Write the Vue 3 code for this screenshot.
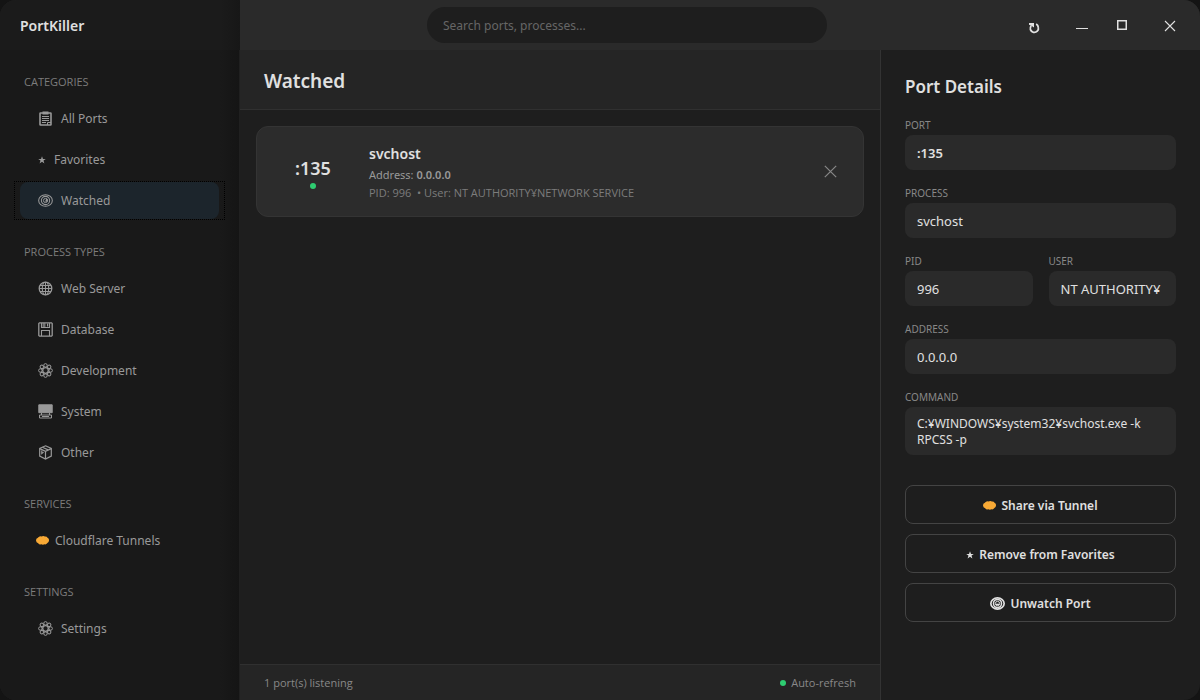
<template>
  <svg class="sprite" aria-hidden="true">
    <symbol id="clipboard" viewBox="0 0 15 15">
      <rect x="2" y="2" width="11" height="12" rx="0.5" fill="none" stroke="currentColor" stroke-width="1.6" />
      <rect x="4.5" y="0.5" width="6" height="3" fill="currentColor" />
      <path d="M4 5.5h7M4 7.5h7M4 9.5h7M4 11.5h4" fill="none" stroke="currentColor" />
      <path d="M9.5 14v-2.5h3.5" fill="none" stroke="currentColor" />
    </symbol>
    <symbol id="star" viewBox="0 0 8 8">
      <path d="M4 0.2l1 2.7h2.8L5.5 4.6l0.9 3L4 5.8 1.6 7.6l0.9-3L0.2 2.9H3z" fill="currentColor" />
    </symbol>
    <symbol id="eye" viewBox="0 0 16 14">
      <ellipse cx="8" cy="7" rx="7.3" ry="6.2" fill="none" stroke="currentColor" stroke-width="1.1" />
      <circle cx="8" cy="7" r="4.4" fill="none" stroke="currentColor" stroke-width="1.1" />
      <circle cx="8" cy="7" r="2.2" fill="none" stroke="currentColor" />
      <path d="M8 7l1-2.4a2.6 2.6 0 0 1 1.5 3.2L8 8.6z" fill="currentColor" />
    </symbol>
    <symbol id="eye-solid" viewBox="0 0 16 14">
      <ellipse cx="8" cy="7" rx="7.1" ry="6" fill="none" stroke="currentColor" stroke-width="1.8" />
      <circle cx="8" cy="7" r="4.3" fill="none" stroke="currentColor" stroke-width="1.6" />
      <circle cx="8" cy="7" r="2.3" fill="none" stroke="currentColor" />
      <path d="M6 7.2h4v1.6H6z" fill="currentColor" />
    </symbol>
    <symbol id="globe" viewBox="0 0 15 15">
      <g fill="none" stroke="currentColor">
        <circle cx="7.5" cy="7.5" r="6.3" stroke-width="1.3" />
        <ellipse cx="7.5" cy="7.5" rx="3.2" ry="6.2" stroke-width="1.1" />
        <path d="M7.5 1v13M1 7.5h13M2 4.5h11M2 10.5h11" />
      </g>
    </symbol>
    <symbol id="disk" viewBox="0 0 15 15">
      <g fill="none" stroke="currentColor">
        <path d="M1.5 0.8h12l0.7 0.7v12l-0.7 0.7h-12l-0.7-0.7v-12z" stroke-width="1.3" />
        <path d="M3.5 1v4.5h8V1M3.5 14V8.5h8V14" stroke-width="1.1" />
      </g>
      <path d="M4.5 1h3v4h-3z" fill="currentColor" opacity="0.7" />
      <path d="M9 1.5h1.2v3h-1.2z" fill="currentColor" />
    </symbol>
    <symbol id="gear" viewBox="0 0 15 15">
      <g fill="none" stroke="currentColor">
        <circle cx="7.5" cy="7.5" r="2.8" stroke-width="1.3" />
        <circle
          v-for="n in 8"
          :key="n"
          cx="7.5"
          cy="2.3"
          r="1.7"
          :transform="`rotate(${n * 45} 7.5 7.5)`"
        />
      </g>
    </symbol>
    <symbol id="computer" viewBox="0 0 15 15">
      <path d="M0.8 0.8h13.4v7.9h-13.4z" fill="currentColor" stroke="currentColor" />
      <path d="M3.5 9v2M11.5 9v2M1.5 11h12v3h-12zM4 12.5h7" fill="none" stroke="currentColor" />
    </symbol>
    <symbol id="box" viewBox="0 0 15 15">
      <g fill="none" stroke="currentColor" stroke-width="1.2">
        <path d="M7.5 0.8l5.8 2.7v7.6l-5.8 3-5.8-3V3.5z" />
        <path d="M1.7 3.6l5.8 2.8 5.8-2.8M7.5 6.4V14M4.4 2.2l5.8 2.7" />
        <path d="M3.8 5.5v3l1.8-1.4" />
      </g>
    </symbol>
    <symbol id="cloud" viewBox="0 0 13 9">
      <path
        d="M2.4 1.2Q4 0 5.4 0.4Q7.4-0.3 9 0.4Q11 0.3 11.5 1.8Q13.2 2.6 13 4.5Q12.9 6.4 11.4 7Q10.2 8.7 8.6 8.3Q6.8 9 5.2 8.3Q3.1 8.7 2.2 7.2Q0.1 6.6 0 4.5Q0 2.4 1.6 2z"
        fill="#f8a935"
      />
    </symbol>
  </svg>

  <div class="window">
    <div class="brand">PortKiller</div>

    <header class="titlebar">
      <div class="search-area">
        <input
          v-model="query"
          class="search"
          type="text"
          aria-label="Search ports, processes"
          placeholder="Search ports, processes..."
        />
      </div>
      <div class="window-buttons">
        <button class="refresh" aria-label="Refresh">
          <svg width="12" height="12" viewBox="0 0 12 12">
            <path d="M3.2 3.8A4.1 4 0 1 0 10.3 5.4Q10.2 3.2 8.2 2" fill="none" stroke="currentColor" stroke-width="1.8" />
            <path d="M1 1h5v4.6L4.2 4.2 1 2.8z" fill="currentColor" />
          </svg>
        </button>
        <button class="minimize" aria-label="Minimize">
          <svg width="12" height="12" viewBox="0 0 12 12">
            <path d="M0 9.5h12" stroke="currentColor" />
          </svg>
        </button>
        <button class="maximize" aria-label="Maximize">
          <svg width="10" height="10" viewBox="0 0 10 10">
            <rect x="0.75" y="0.75" width="8.5" height="8.5" fill="none" stroke="currentColor" stroke-width="1.5" />
          </svg>
        </button>
        <button class="close" aria-label="Close">
          <svg width="12" height="12" viewBox="0 0 12 12">
            <path d="M1 1l10 10M11 1L1 11" stroke="currentColor" stroke-width="1.1" />
          </svg>
        </button>
      </div>
    </header>

    <nav class="sidebar">
      <section v-for="group in groups" :key="group.title" class="nav-group">
        <h2>{{ group.title }}</h2>
        <ul>
          <li v-for="item in group.items" :key="item.label">
            <button
              class="nav-item"
              :class="[item.icon, { active: item.label === selected }]"
              @click="selected = item.label"
            >
              <svg class="icon" :class="item.icon" aria-hidden="true"><use :href="'#' + item.icon" /></svg>
              {{ item.label }}
            </button>
          </li>
        </ul>
      </section>
    </nav>

    <main class="content">
      <h1 class="page-title">{{ selected }}</h1>
      <div class="port-list">
        <article class="port-card">
          <div class="port-number">
            <strong>:{{ port.number }}</strong>
            <span class="dot"></span>
          </div>
          <div class="port-info">
            <h3>{{ port.process }}</h3>
            <p class="address">Address: <b>{{ port.address }}</b></p>
            <p class="meta">PID: {{ port.pid }} &nbsp;• User: {{ port.user }}</p>
          </div>
          <button class="kill" aria-label="Kill process">
            <svg width="13" height="13" viewBox="0 0 13 13">
              <path d="M0.8 0.8l11.4 11.4M12.2 0.8L0.8 12.2" stroke="currentColor" stroke-width="1.2" />
            </svg>
          </button>
        </article>
      </div>
      <footer class="statusbar">
        <span>1 port(s) listening</span>
        <span class="auto"><span class="dot"></span>Auto-refresh</span>
      </footer>
    </main>

    <aside class="details">
      <h2>Port Details</h2>
      <dl>
        <div class="field">
          <dt>PORT</dt>
          <dd class="strong">:{{ port.number }}</dd>
        </div>
        <div class="field">
          <dt>PROCESS</dt>
          <dd>{{ port.process }}</dd>
        </div>
        <div class="field half">
          <dt>PID</dt>
          <dd>{{ port.pid }}</dd>
        </div>
        <div class="field half">
          <dt>USER</dt>
          <dd>NT AUTHORITY¥</dd>
        </div>
        <div class="field">
          <dt>ADDRESS</dt>
          <dd>{{ port.address }}</dd>
        </div>
        <div class="field">
          <dt>COMMAND</dt>
          <dd class="command">{{ port.command }}</dd>
        </div>
      </dl>
      <div class="actions">
        <button v-for="action in actions" :key="action.label">
          <svg class="icon" :class="action.icon" aria-hidden="true"><use :href="'#' + action.icon" /></svg>
          {{ action.label }}
        </button>
      </div>
    </aside>
  </div>
</template>

<script setup>
import { ref } from 'vue'

const query = ref('')
const selected = ref('Watched')

const groups = [
  {
    title: 'CATEGORIES',
    items: [
      { label: 'All Ports', icon: 'clipboard' },
      { label: 'Favorites', icon: 'star' },
      { label: 'Watched', icon: 'eye' }
    ]
  },
  {
    title: 'PROCESS TYPES',
    items: [
      { label: 'Web Server', icon: 'globe' },
      { label: 'Database', icon: 'disk' },
      { label: 'Development', icon: 'gear' },
      { label: 'System', icon: 'computer' },
      { label: 'Other', icon: 'box' }
    ]
  },
  {
    title: 'SERVICES',
    items: [{ label: 'Cloudflare Tunnels', icon: 'cloud' }]
  },
  {
    title: 'SETTINGS',
    items: [{ label: 'Settings', icon: 'gear' }]
  }
]

const port = {
  number: 135,
  process: 'svchost',
  address: '0.0.0.0',
  pid: 996,
  user: 'NT AUTHORITY¥NETWORK SERVICE',
  command: 'C:¥WINDOWS¥system32¥svchost.exe -k RPCSS -p'
}

const actions = [
  { label: 'Share via Tunnel', icon: 'cloud' },
  { label: 'Remove from Favorites', icon: 'star' },
  { label: 'Unwatch Port', icon: 'eye-solid' }
]
</script>

<style>
body {
  background: #141414;
}
</style>

<style scoped>
.sprite {
  display: none;
}

.window {
  display: grid;
  grid-template-columns: 240px 1fr 320px;
  grid-template-rows: 50px 1fr;
  min-height: 100vh;
  border-radius: 16px;
  overflow: hidden;
  background: #1e1e1e;
  color: #e0e0e0;
  font-family: "Noto Sans", "Open Sans", sans-serif;
  font-size: 13px;
}

h1,
h2,
h3,
p,
ul,
dl,
dd {
  margin: 0;
  padding: 0;
}

button,
input {
  font: inherit;
  color: inherit;
  border: none;
  background: none;
}

button {
  padding: 0;
  cursor: pointer;
}

svg {
  display: block;
  flex: none;
}

.brand {
  display: flex;
  align-items: center;
  padding-left: 20px;
  background: linear-gradient(to right, #1b1b1b 92%, #171717);
  font-size: 14px;
  font-weight: 600;
}

.titlebar {
  grid-column: 2 / 4;
  display: flex;
  background: #2a2a2a;
}

.search-area {
  flex: 1;
  display: flex;
  align-items: center;
  justify-content: center;
}

.search {
  box-sizing: border-box;
  width: 400px;
  height: 36px;
  padding: 0 16px;
  border-radius: 18px;
  background: #1e1e1e;
  font-size: 12px;
  outline: none;
}

.search::placeholder {
  color: #666;
  opacity: 1;
}

.window-buttons {
  display: flex;
  padding-right: 10px;
}

.window-buttons button {
  display: flex;
  align-items: center;
  justify-content: center;
  width: 40px;
}

.window-buttons .refresh {
  margin-right: 8px;
  padding-top: 6px;
}

.window-buttons .maximize {
  margin-right: 8px;
}

.window-buttons .close {
  padding-top: 2px;
}

.sidebar {
  padding: 24px 20px;
  border-right: 1px solid #202020;
  background: linear-gradient(to right, #191919 92%, #151515);
}

.nav-group {
  margin-bottom: 25px;
}

.nav-group h2 {
  margin: 0 0 10px 4px;
  color: #7c7c7c;
  font-family: "Open Sans", sans-serif;
  font-size: 11px;
  font-weight: 400;
  line-height: 16px;
}

.nav-group ul {
  display: grid;
  gap: 4px;
  list-style: none;
}

.nav-item {
  position: relative;
  display: flex;
  align-items: center;
  gap: 8px;
  width: 100%;
  height: 37px;
  padding-left: 18px;
  border-radius: 8px;
  color: #999;
  font-size: 12px;
  text-align: left;
}

.nav-item.cloud {
  gap: 6px;
  padding-left: 16px;
}

.nav-item.active {
  background: #1c252c;
}

.nav-item.active::after {
  content: "";
  position: absolute;
  inset: -1px -6px;
  border: 1px dotted #000;
}

.icon {
  width: 15px;
  height: 15px;
}

.icon.star {
  width: 8px;
  height: 8px;
}

.icon.cloud {
  width: 13px;
  height: 9px;
}

.content {
  display: flex;
  flex-direction: column;
  min-width: 0;
}

.page-title {
  padding: 18px 24px 15px;
  border-bottom: 1px solid #303030;
  background: #252525;
  font-size: 19px;
  font-weight: 600;
  line-height: 26px;
}

.port-list {
  flex: 1;
  padding: 16px;
}

.port-card {
  display: flex;
  align-items: center;
  box-sizing: border-box;
  min-height: 91px;
  padding: 0 17px 0 16px;
  border: 1px solid #343434;
  border-radius: 12px;
  background: #2c2c2c;
}

.port-number {
  display: grid;
  justify-items: center;
  gap: 2px;
  width: 80px;
  margin-right: 16px;
}

.port-number strong {
  font-size: 18px;
  font-weight: 600;
  line-height: 26px;
}

.dot {
  width: 6px;
  height: 6px;
  border-radius: 50%;
  background: #2ecc71;
}

.port-info {
  flex: 1;
}

.port-info h3 {
  font-size: 14px;
  font-weight: 600;
  line-height: 24px;
}

.address {
  color: #999;
  font-size: 11px;
  line-height: 18px;
}

.address b {
  font-weight: 600;
}

.meta {
  color: #7c7c7c;
  font-family: "Open Sans", sans-serif;
  font-size: 11px;
  line-height: 17px;
}

.kill {
  display: flex;
  align-items: center;
  justify-content: center;
  width: 32px;
  height: 32px;
  color: #888;
}

.statusbar {
  display: flex;
  align-items: center;
  justify-content: space-between;
  height: 35px;
  padding: 0 24px;
  border-top: 1px solid #303030;
  background: #252525;
  color: #888;
  font-family: "Open Sans", sans-serif;
  font-size: 11px;
}

.auto {
  display: flex;
  align-items: center;
  gap: 5px;
}

.details {
  padding: 24px;
  border-left: 1px solid #333;
}

.details h2 {
  margin-bottom: 17px;
  font-size: 17px;
  font-weight: 600;
  line-height: 26px;
}

.details dl {
  display: grid;
  grid-template-columns: 1fr 1fr;
  gap: 15px 16px;
}

.field {
  grid-column: span 2;
  min-width: 0;
}

.field.half {
  grid-column: span 1;
}

.field dt {
  margin-bottom: 2px;
  color: #888;
  font-size: 10px;
  line-height: 16px;
}

.field dd {
  padding: 9px 12px 7px;
  border-radius: 8px;
  background: #2a2a2a;
  font-size: 13px;
  line-height: 19px;
  white-space: nowrap;
}

.field .strong {
  font-weight: 600;
}

.field .command {
  font-size: 12px;
  line-height: 16px;
  white-space: normal;
}

.actions {
  display: grid;
  gap: 10px;
  margin-top: 30px;
}

.actions button {
  display: flex;
  align-items: center;
  justify-content: center;
  gap: 5px;
  box-sizing: border-box;
  height: 39px;
  padding-top: 2px;
  border: 1px solid #444;
  border-radius: 8px;
  font-size: 12px;
  font-weight: 600;
}
</style>
